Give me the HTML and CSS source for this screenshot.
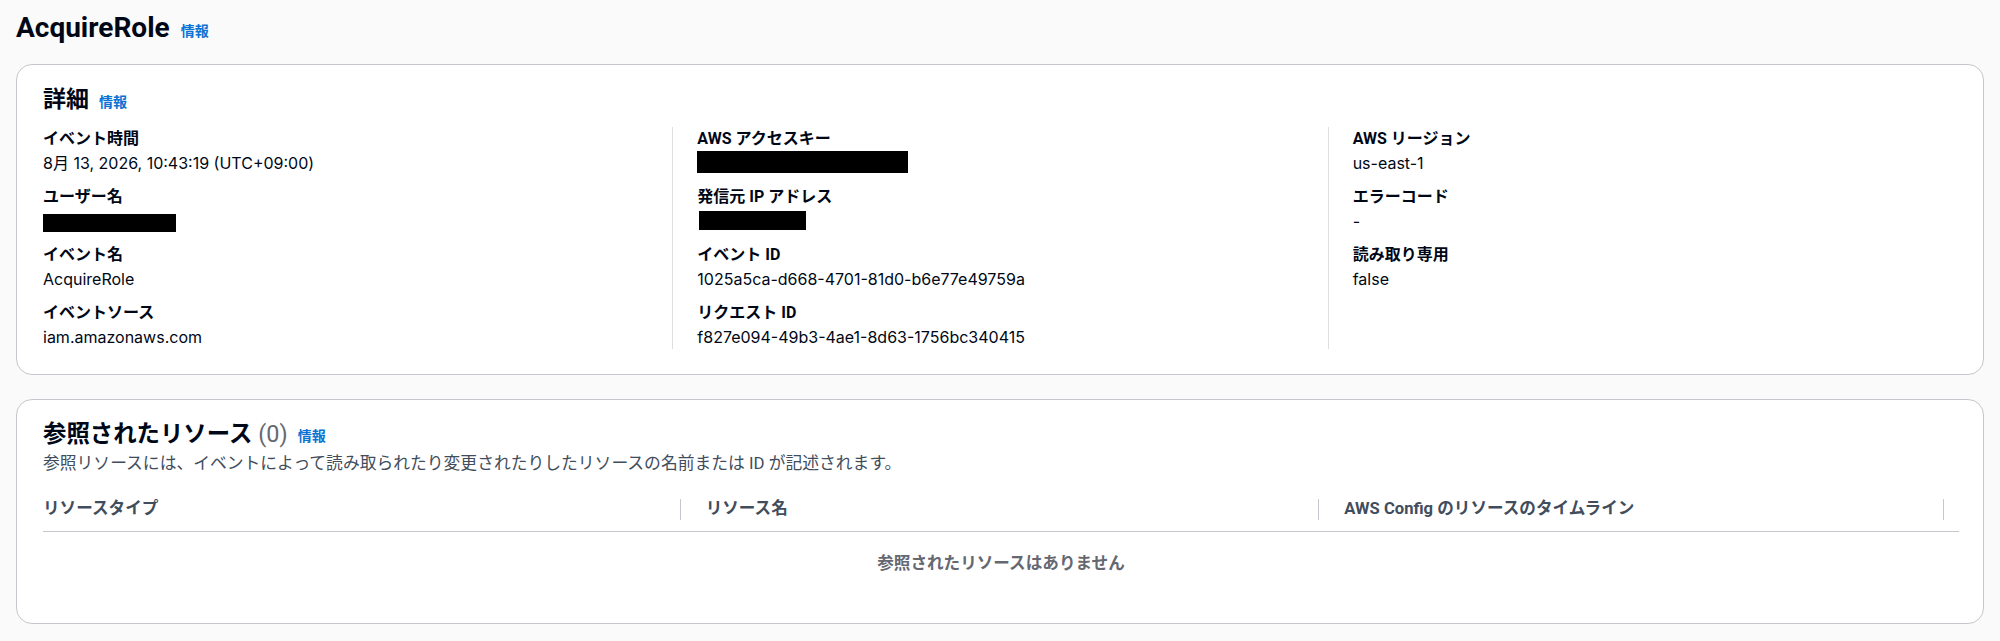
FILE: index.html
```html
<!DOCTYPE html>
<html lang="ja">
<head>
<meta charset="utf-8">
<title>AcquireRole</title>
<link rel="stylesheet" href="styles.css">
</head>
<body>
<div class="page">
  <h1 class="page-title"><span>AcquireRole</span><a class="info">情報</a></h1>

  <section class="card">
    <h2 class="card-title"><span>詳細</span><a class="info">情報</a></h2>
    <div class="cols">
      <div class="col">
        <div class="kv"><div class="k">イベント時間</div><div class="v">8月 13, 2026, 10:43:19 (UTC+09:00)</div></div>
        <div class="kv"><div class="k">ユーザー名</div><div class="v"><span class="redact redact-user"></span></div></div>
        <div class="kv"><div class="k">イベント名</div><div class="v">AcquireRole</div></div>
        <div class="kv"><div class="k">イベントソース</div><div class="v">iam.amazonaws.com</div></div>
      </div>
      <div class="col">
        <div class="kv"><div class="k">AWS アクセスキー</div><div class="v"><span class="redact redact-key"></span></div></div>
        <div class="kv"><div class="k">発信元 IP アドレス</div><div class="v"><span class="redact redact-ip"></span></div></div>
        <div class="kv"><div class="k">イベント ID</div><div class="v">1025a5ca-d668-4701-81d0-b6e77e49759a</div></div>
        <div class="kv"><div class="k">リクエスト ID</div><div class="v">f827e094-49b3-4ae1-8d63-1756bc340415</div></div>
      </div>
      <div class="col">
        <div class="kv"><div class="k">AWS リージョン</div><div class="v">us-east-1</div></div>
        <div class="kv"><div class="k">エラーコード</div><div class="v">-</div></div>
        <div class="kv"><div class="k">読み取り専用</div><div class="v">false</div></div>
      </div>
    </div>
  </section>

  <section class="card resources">
    <h2 class="card-title"><span>参照されたリソース</span><span class="count">(0)</span><a class="info">情報</a></h2>
    <p class="desc">参照リソースには、イベントによって読み取られたり変更されたりしたリソースの名前または ID が記述されます。</p>
    <div class="table">
      <div class="thead">
        <div class="th"><span>リソースタイプ</span><i class="sep"></i></div>
        <div class="th"><span>リソース名</span><i class="sep"></i></div>
        <div class="th"><span>AWS Config のリソースのタイムライン</span><i class="sep"></i></div>
        <div class="th th-rest"></div>
      </div>
      <div class="empty">参照されたリソースはありません</div>
    </div>
  </section>
</div>
</body>
</html>
```

FILE: styles.css
```css
* { box-sizing: border-box; }

html, body {
  margin: 0;
  padding: 0;
  background: #fafafa;
}

body {
  font-family: Roboto, "Noto Sans CJK JP", sans-serif;
  font-size: 16px;
  line-height: 24px;
  color: #000716;
}

.page {
  padding: 10px 16px 16px 16px;
}

.page-title {
  margin: 0 0 18px 0;
  display: flex;
  align-items: center;
  font-size: 28px;
  line-height: 36px;
  font-weight: 700;
  color: #000716;
}

.info {
  font-family: "Noto Sans CJK JP", sans-serif;
  font-size: 14px;
  line-height: 20px;
  font-weight: 700;
  color: #0972d3;
  margin-left: 11px;
  cursor: pointer;
}

.page-title .info {
  margin-top: 4px;
}

.card {
  background: #ffffff;
  border: 1px solid #c6c6cd;
  border-radius: 16px;
  padding: 21px 0 25px 0;
}

.card + .card {
  margin-top: 24px;
}

.card-title {
  margin: 0 0 13px 0;
  padding: 0 26px;
  display: flex;
  align-items: center;
  font-size: 23px;
  line-height: 28px;
  font-weight: 700;
}

.card-title .info {
  margin-left: 10px;
  margin-top: 2px;
}

.cols {
  display: grid;
  grid-template-columns: 1fr 1fr 1fr;
}

.col {
  display: flex;
  flex-direction: column;
  gap: 10px;
  padding-left: 26px;
}

.col + .col {
  border-left: 1px solid #dedee3;
  padding-left: 24px;
}

.kv .k {
  font-weight: 700;
  line-height: 24px;
}

.kv .v {
  display: flow-root;
  font-family: Inter, Roboto, "Noto Sans CJK JP", sans-serif;
  line-height: 24px;
  min-height: 24px;
}

.redact {
  display: block;
  background: #000000;
}

.redact-user {
  width: 133px;
  height: 18px;
  margin-top: 5px;
}

.redact-key {
  width: 211px;
  height: 22px;
}

.redact-ip {
  width: 107px;
  height: 19px;
  margin-top: 2px;
  margin-left: 2px;
}

/* resources card */
.resources {
  padding: 20px 26px 47px 26px;
}

.resources .card-title {
  padding: 0;
  margin: 0;
  font-size: 23.4px;
}

.count {
  font-family: Roboto, sans-serif;
  font-weight: 400;
  color: #656871;
  margin-left: 6px;
}

.desc {
  margin: 3px 0 0 0;
  font-size: 16.8px;
  line-height: 24px;
  color: #414d5c;
}

.table {
  margin-top: 12px;
  margin-right: -2px;
}

.thead {
  display: grid;
  grid-template-columns: 638fr 639fr 625fr 15fr;
  border-bottom: 1px solid #c6c6cd;
  height: 45px;
}

.th {
  display: flex;
  align-items: center;
  justify-content: space-between;
  font-size: 16.6px;
  font-weight: 700;
  color: #414d5c;
  padding-left: 25px;
}

.th:first-child {
  padding-left: 0;
}

.th-rest {
  padding-left: 0;
}

.sep {
  display: block;
  width: 1px;
  height: 21px;
  background: #c6c6cd;
}

.empty {
  padding-top: 20px;
  text-align: center;
  font-size: 16.6px;
  font-weight: 700;
  color: #656871;
}
```
